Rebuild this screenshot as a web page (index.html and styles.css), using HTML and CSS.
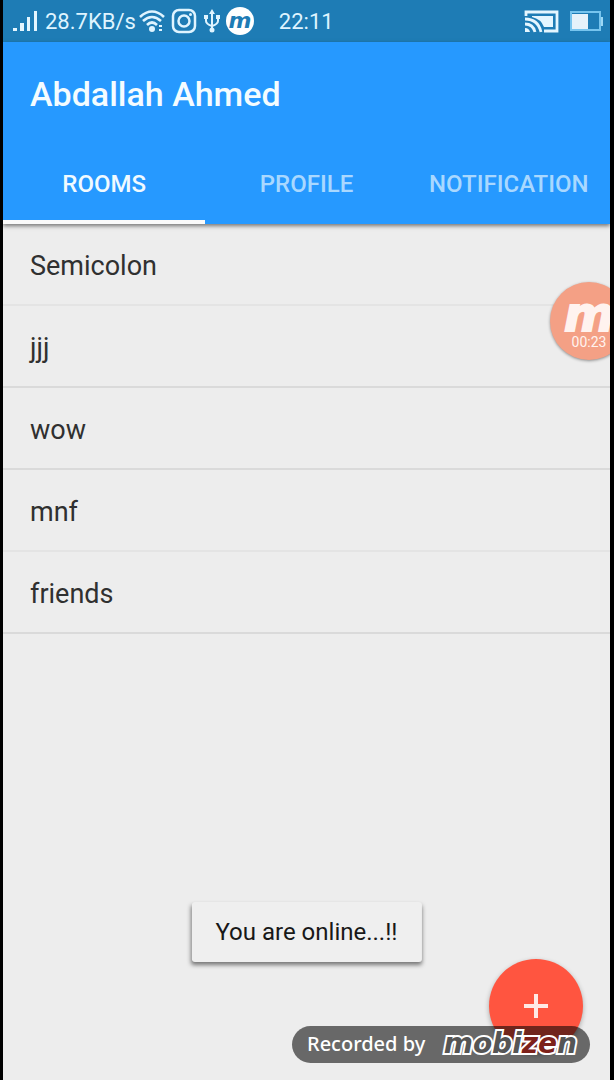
FILE: index.html
```html
<!DOCTYPE html>
<html lang="en">
<head>
<meta charset="utf-8">
<meta name="viewport" content="width=device-width, initial-scale=1">
<title>Rooms</title>
<link rel="stylesheet" href="styles.css">
</head>
<body>
<div class="screen">
  <div class="status">
    <div class="status-left">
      <svg class="signal" width="25" height="22" viewBox="0 0 25 22" fill="#e4f6ff" aria-hidden="true"><path d="M0 18h4v3H0zM7 13h4v8H7zM14 7h3v14h-3zM21 1h3v20h-3z"/></svg>
      <span class="speed">28.7KB/s</span>
      <svg width="26" height="24" viewBox="0 0 26 24" fill="none" stroke="#dff4ff" stroke-width="2.6" aria-hidden="true"><path d="M1 8Q13-3 25 8M4 12Q13 4 22 12M8 16Q13 11 18 16"/><circle cx="13" cy="20" r="3" fill="#dff4ff" stroke="none"/><path d="M20 17h3M20 21h3" stroke-width="2"/></svg>
      <svg class="camera" width="26" height="26" viewBox="0 0 26 26" fill="none" stroke="#dff4ff" stroke-width="2.5" aria-hidden="true"><rect x="2" y="2" width="22" height="22" rx="6"/><circle cx="13" cy="13" r="5.5"/><circle cx="19.500" cy="6.500" r="1.500" fill="#dff4ff" stroke="none"/></svg>
      <svg class="usb" width="16" height="24" viewBox="0 0 16 24" fill="none" stroke="#dff4ff" stroke-width="2" aria-hidden="true"><path d="M8 3v17M2 8v4q0 3 6 5M14 8v4q0 3-6 5"/><path d="M8 0l3 5H5zM0 6h4v4H0zM12 6h4v4h-4z" fill="#dff4ff" stroke="none"/><circle cx="8" cy="21" r="2.500" fill="#dff4ff" stroke="none"/></svg>
      <span class="mini-logo">m</span>
      <time class="clock">22:11</time>
    </div>
    <div class="status-right">
      <svg width="35" height="23" viewBox="0 0 35 23" fill="none" stroke="#e4f6ff" stroke-width="2.8" aria-hidden="true"><path d="M2 6V2h31v19H20"/><path d="M8 6h21v11H20Q17 9 8 7z" fill="#e4f6ff" stroke="none"/><path d="M1 9q13 0 16 13M1 14q8 0 10 8"/><path d="M1 18q4 0 5 4H1z" fill="#e4f6ff" stroke="none"/></svg>
      <svg width="34" height="21" viewBox="0 0 34 21" aria-hidden="true"><rect x="1" y="1" width="29" height="18" fill="none" stroke="#76c4ee" stroke-width="2"/><path d="M2 3h16v15H2z" fill="#e6f2fa"/><path d="M31 6h2v9h-2z" fill="#9bd7f5"/></svg>
    </div>
  </div>
  <header class="appbar">
    <h1 class="title">Abdallah Ahmed</h1>
    <nav class="tabs" role="tablist">
      <button class="tab tab-active" role="tab" aria-selected="true">ROOMS</button>
      <button class="tab" role="tab" aria-selected="false">PROFILE</button>
      <button class="tab" role="tab" aria-selected="false">NOTIFICATION</button>
    </nav>
  </header>
  <main>
    <ul class="rooms">
      <li class="room room-faint">Semicolon</li>
      <li class="room">jjj</li>
      <li class="room">wow</li>
      <li class="room room-faint">mnf</li>
      <li class="room">friends</li>
    </ul>
  </main>
  <div class="recorder"><div class="bubble"><span class="bubble-logo">m</span><span class="bubble-time">00:23</span></div></div>
  <div class="toast" role="status">You are online...!!</div>
  <button class="fab" aria-label="Add room"><svg width="26" height="26" viewBox="0 0 26 26" stroke="#ffe9e5" stroke-width="4" aria-hidden="true"><path d="M13 1v24M1 13h24"/></svg></button>
  <div class="watermark"><span>Recorded by</span><span class="wordmark">mobi<span class="wordmark-red">ze</span>n</span></div>
</div>
</body>
</html>
```
FILE: styles.css
```css
* { box-sizing: border-box; }
body {
  margin: 0;
  padding: 0 4px 0 3px;
  background: #000;
  font-family: Roboto, "Liberation Sans", sans-serif;
}
.screen {
  position: relative;
  min-height: 100vh;
  background: #ededed;
  overflow: hidden;
}
.status {
  display: flex;
  justify-content: space-between;
  align-items: center;
  height: 42px;
  padding: 0 6px 0 10px;
  background: #1e7cb5;
  color: #dff4ff;
  font-size: 22px;
}
.status-left, .status-right { display: flex; align-items: center; }
.status-right { gap: 11px; }
.speed { margin: 0 3px 0 7px; }
.camera { margin-left: 6px; }
.usb { margin: 0 6px 0 7px; }
.mini-logo {
  width: 28px;
  height: 28px;
  border-radius: 50%;
  background: #fff;
  color: #1e7cb5;
  font: italic bold 22px/24px "DejaVu Sans", sans-serif;
  text-align: center;
}
.clock { margin-left: 25px; }
.appbar {
  position: relative;
  background: #2699ff;
  color: #f4fcff;
  box-shadow: 0 2px 4px rgba(0, 0, 0, .5);
}
.title {
  margin: 0;
  padding: 32px 27px 29px;
  font-size: 34px;
  line-height: 40px;
  font-weight: 500;
}
.tabs { display: grid; grid-template-columns: repeat(3, 1fr); }
.tab {
  height: 81px;
  padding: 4px 0 0;
  border: 0;
  border-bottom: 4px solid transparent;
  background: none;
  color: #a9d8ff;
  font: 500 24px/28px Roboto, sans-serif;
}
.tab-active { color: #f0faff; border-bottom-color: #fafafa; }
.rooms { margin: 0; padding: 0; list-style: none; }
.room {
  display: flex;
  align-items: center;
  height: 82px;
  padding: 4px 27px 0;
  border-bottom: 2px solid #dadada;
  color: #303030;
  font-size: 27px;
}
.room-faint { border-bottom-color: #e4e4e4; }
.recorder {
  position: absolute;
  top: 282px;
  right: -18px;
}
.bubble {
  display: flex;
  flex-direction: column;
  align-items: center;
  width: 78px;
  height: 78px;
  padding-top: 14px;
  border-radius: 50%;
  background: #f4a085;
  box-shadow: 0 1px 3px rgba(0, 0, 0, .4);
  color: #fff3ef;
}
.bubble-logo {
  height: 36px;
  font: italic bold 48px/36px "DejaVu Sans", sans-serif;
  -webkit-text-stroke: 2px #fff3ef;
}
.bubble-time { font-size: 14px; line-height: 20px; }
.mini-logo { line-height: 27px; }
.toast {
  position: absolute;
  bottom: 118px;
  left: 50%;
  transform: translateX(-50%);
  padding: 16px 24px;
  border-radius: 3px;
  background: #efefef;
  box-shadow: 0 3px 4px rgba(0, 0, 0, .5);
  color: #181818;
  font-size: 24px;
  line-height: 28px;
  white-space: nowrap;
}
.fab {
  position: absolute;
  right: 27px;
  bottom: 27px;
  display: grid;
  place-items: center;
  width: 94px;
  height: 94px;
  padding: 0;
  border: 0;
  border-radius: 50%;
  background: #ff5540;
  box-shadow: 0 2px 5px rgba(0, 0, 0, .3);
}
.watermark {
  position: absolute;
  right: 20px;
  bottom: 17px;
  display: flex;
  align-items: center;
  justify-content: space-between;
  width: 298px;
  height: 37px;
  padding: 0 13px 2px 15px;
  border-radius: 19px;
  background: rgba(0, 0, 0, .56);
  color: #fff;
  font: 500 20px/28px "Noto Sans", sans-serif;
}
.wordmark {
  font: italic bold 28px/28px "DejaVu Sans", sans-serif;
  color: #555;
  -webkit-text-stroke: 4px #fff;
  paint-order: stroke fill;
}
.wordmark-red { color: #7d211a; }
```
